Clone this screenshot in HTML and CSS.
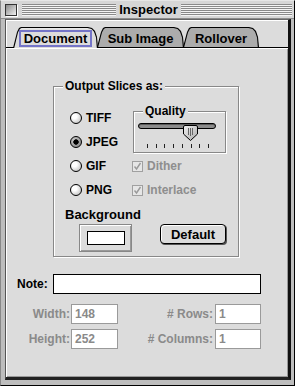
FILE: index.html
```html
<!DOCTYPE html>
<html lang="en">
<head>
    <meta charset="UTF-8">
    <title>Inspector</title>
    <link rel="stylesheet" href="styles.css">
</head>
<body>
    <div class="window">
        <div class="titlebar">
            <div class="title-half">
                <span class="close-box"></span>
                <span class="stripes"></span>
            </div>
            <span class="title">Inspector</span>
            <div class="title-half">
                <span class="stripes"></span>
            </div>
        </div>

        <div class="content">
            <div class="tabs">
                <div class="tab tab-doc active"><span class="tab-label">Document</span></div>
                <div class="tab tab-sub"><span class="tab-label">Sub Image</span></div>
                <div class="tab tab-roll"><span class="tab-label">Rollover</span></div>
            </div>

            <div class="panel">
                <fieldset class="group slices">
                    <legend>Output Slices as:</legend>
                    <div class="options">
                        <label class="radio"><span class="radio-dot"></span>TIFF</label>
                        <fieldset class="group quality">
                            <legend>Quality</legend>
                            <div class="slider">
                                <div class="track"></div>
                                <svg class="thumb" width="15" height="16" viewBox="0 0 15 16">
                                    <defs>
                                        <linearGradient id="thumbfill" x1="0" y1="0" x2="1" y2="1">
                                            <stop offset="0" stop-color="#f4f4f4"/>
                                            <stop offset="1" stop-color="#a8a8a8"/>
                                        </linearGradient>
                                    </defs>
                                    <path d="M2 0.5 H13 Q14.5 0.5 14.5 2 V9 L7.5 15.5 L0.5 9 V2 Q0.5 0.5 2 0.5 Z" fill="url(#thumbfill)" stroke="#000"/>
                                    <path d="M5.5 3 V10 M7.5 3 V11 M9.5 3 V10" stroke="#666"/>
                                </svg>
                            </div>
                            <div class="ticks">
                                <span></span><span></span><span></span><span></span>
                                <span></span><span></span><span></span><span></span>
                            </div>
                        </fieldset>
                        <label class="radio"><span class="radio-dot checked"></span>JPEG</label>
                        <label class="radio"><span class="radio-dot"></span>GIF</label>
                        <label class="check disabled"><span class="check-box"><svg width="9" height="9" viewBox="0 0 9 9"><path d="M1.5 4.5 L3.5 7 L7.5 1" fill="none" stroke="#9a9a9a" stroke-width="1.4"/></svg></span>Dither</label>
                        <label class="radio"><span class="radio-dot"></span>PNG</label>
                        <label class="check disabled"><span class="check-box"><svg width="9" height="9" viewBox="0 0 9 9"><path d="M1.5 4.5 L3.5 7 L7.5 1" fill="none" stroke="#9a9a9a" stroke-width="1.4"/></svg></span>Interlace</label>
                    </div>
                    <div class="bottom-row">
                        <div class="bg-block">
                            <div class="bg-label">Background</div>
                            <div class="swatch"><span class="swatch-color"></span></div>
                        </div>
                        <button class="btn-default">Default</button>
                    </div>
                </fieldset>

                <div class="note-row">
                    <span class="note-label">Note:</span>
                    <div class="field note-field"></div>
                </div>

                <div class="dims">
                    <span class="dim-label">Width:</span>
                    <span class="field dim-field">148</span>
                    <span class="dim-label right"># Rows:</span>
                    <span class="field dim-field">1</span>
                    <span class="dim-label">Height:</span>
                    <span class="field dim-field">252</span>
                    <span class="dim-label right"># Columns:</span>
                    <span class="field dim-field">1</span>
                </div>
            </div>
        </div>
    </div>
</body>
</html>
```

FILE: styles.css
```css
/* Reset */
* {
    margin: 0;
    padding: 0;
    box-sizing: border-box;
}

body {
    background-color: #bdbdbd;
    font-family: "Liberation Sans", Arial, sans-serif;
    font-size: 12px;
    font-weight: bold;
    color: #000;
}

.window {
    width: 295px;
    height: 386px;
    display: flex;
    flex-direction: column;
    background-color: #bdbdbd;
    border: 1px solid #000;
    border-color: #e6e6e6 #000 #000 #888;
}

/* Title bar */
.titlebar {
    height: 18px;
    display: flex;
    align-items: center;
    padding: 0 2px 0 4px;
    background-color: #d6d6d6;
    border-bottom: 1px solid #8c8c8c;
}

.title-half {
    flex: 1;
    display: flex;
    align-items: center;
}

.close-box {
    width: 12px;
    height: 12px;
    margin-top: 1px;
    margin-right: 5px;
    border: 1px solid #333;
    background: linear-gradient(135deg, #8a8a8a, #f0f0f0);
    box-shadow: 1px 1px 0 #fff;
}

.stripes {
    flex: 1;
    height: 12px;
    margin-top: 1px;
    background: repeating-linear-gradient(to bottom, #8a8a8a 0, #8a8a8a 1px, #f4f4f4 1px, #f4f4f4 2px);
}

.title {
    font-size: 13px;
    padding: 0 3px;
}

/* Window content */
.content {
    flex: 1;
    display: flex;
    flex-direction: column;
    margin: 0 3px 5px 4px;
    background-color: #dcdcdc;
    border-left: 1px solid #555;
    border-top: 1px solid #666;
    border-right: 3px solid #111;
    border-bottom: 3px solid #222;
    box-shadow: inset 1px 1px 0 #fff;
}

/* Tabs */
.tabs {
    position: relative;
    z-index: 2;
    display: flex;
    height: 27px;
    padding: 7px 0 0 7px;
}

.tab {
    position: relative;
    z-index: 1;
    height: 20px;
    display: flex;
    justify-content: center;
    align-items: flex-start;
    padding-top: 3px;
    font-size: 13px;
}

.tab::before {
    content: "";
    position: absolute;
    inset: 0;
    z-index: -2;
    background-color: #000;
    clip-path: polygon(0 100%, 4px 5px, 6px 1px, 8px 0, calc(100% - 10px) 0, calc(100% - 6px) 1px, calc(100% - 3px) 4px, calc(100% - 1px) 10px, 100% 100%);
}

.tab::after {
    content: "";
    position: absolute;
    inset: 0;
    z-index: -1;
    background-color: #acacac;
    clip-path: polygon(1.2px 100%, 5px 5.5px, 6.8px 2px, 8.5px 1px, calc(100% - 10.5px) 1px, calc(100% - 6.5px) 2px, calc(100% - 4px) 4.8px, calc(100% - 2px) 10.5px, calc(100% - 1.2px) 100%);
}

.tab-doc { width: 85px; }
.tab-sub { width: 87px; margin-left: -1px; }
.tab-roll { width: 76px; margin-left: -1px; }

.tab.active {
    z-index: 3;
    height: 21px;
}

.tab.active::after {
    background: linear-gradient(to bottom, #f2f2f2 0, #dcdcdc 3px);
}

.tab-label {
    height: 17px;
    line-height: 13px;
    padding: 0 3px;
    border: 2px solid transparent;
}

.active .tab-label {
    border-color: #7474c8;
}

/* Tab panel */
.panel {
    flex: 1;
    border-top: 1px solid #000;
    box-shadow: inset 1px 1px 0 #fff, inset -1px -1px 0 #999;
}

.group {
    border: 1px solid #888;
    box-shadow: inset 1px 1px 0 #fff, 1px 1px 0 #fff;
}

.group legend {
    background-color: #dcdcdc;
    padding: 0 2px;
}

.slices {
    width: 186px;
    margin: 31px 0 0 47px;
    padding: 13px 10px 4px 16px;
}

.slices > legend {
    line-height: 14px;
    margin-left: -7px;
}

.options {
    display: grid;
    grid-template-columns: 62px 1fr;
    grid-auto-rows: 24px;
}

.radio,
.check {
    display: flex;
    align-items: center;
    gap: 4px;
}

.radio-dot {
    width: 12px;
    height: 12px;
    border-radius: 50%;
    border: 1px solid #000;
    background: radial-gradient(circle at 35% 35%, #fff 0, #fff 25%, #b4b4b4 95%);
}

.radio-dot.checked {
    background: radial-gradient(circle, #000 0, #000 2.4px, transparent 3px),
                radial-gradient(circle at 35% 35%, #d0d0d0 0, #7c7c7c 95%);
}

.check {
    color: #8e8e8e;
}

.check-box {
    width: 11px;
    height: 11px;
    display: flex;
    align-items: center;
    justify-content: center;
    border: 1px solid #a0a0a0;
    background-color: #e6e6e6;
}

/* Quality slider */
.quality {
    grid-row: span 2;
    align-self: start;
    width: 93px;
    margin: -1px 0 0 1px;
    padding: 1px 4px 4px 4px;
}

.quality legend {
    line-height: 12px;
    margin-left: 5px;
}

.slider {
    position: relative;
    height: 17px;
}

.track {
    width: 78px;
    height: 6px;
    margin-top: 5px;
    border: 1px solid #000;
    border-radius: 3px;
    background-color: #8c8c8c;
    box-shadow: inset 0 1px 0 #5a5a5a;
}

.thumb {
    position: absolute;
    left: 45px;
    top: 2px;
}

.ticks {
    display: flex;
    justify-content: space-between;
    width: 62px;
    height: 4px;
    margin: 4px 0 0 9px;
}

.ticks span {
    width: 1px;
    background-color: #222;
}

/* Background + Default */
.bottom-row {
    display: flex;
    margin: 6px 0 0 -5px;
}

.bg-block {
    width: 75px;
    display: flex;
    flex-direction: column;
}

.bg-label {
    font-size: 13px;
    line-height: 14px;
}

.swatch {
    width: 53px;
    height: 28px;
    margin: 2px 0 0 14px;
    padding: 6px 6px 6px 7px;
    display: flex;
    border: 1px solid #888;
    background-color: #dcdcdc;
    box-shadow: inset 1px 1px 0 #fff, inset -1px -1px 0 #9a9a9a;
}

.swatch-color {
    flex: 1;
    border: 1px solid #000;
    background-color: #fff;
}

.btn-default {
    width: 66px;
    height: 20px;
    margin: 16px 0 0 20px;
    font-family: inherit;
    font-size: 13px;
    font-weight: bold;
    color: #000;
    background-color: #dcdcdc;
    border: 1px solid #000;
    border-radius: 4px;
    box-shadow: inset 1px 1px 0 #fff, 1px 1px 0 #555;
}

/* Note + dimensions */
.note-row {
    display: flex;
    align-items: center;
    margin: 17px 0 0 11px;
}

.note-label {
    width: 36px;
}

.field {
    background-color: #fff;
}

.note-field {
    width: 208px;
    height: 20px;
    border: 1px solid #000;
}

.dims {
    display: grid;
    grid-template-columns: 58px 47px 97px 46px;
    grid-auto-rows: 20px;
    row-gap: 5px;
    margin: 10px 0 0 7px;
    color: #8a8a8a;
}

.dim-label {
    text-align: right;
    line-height: 20px;
    padding-right: 1px;
}

.dim-label.right {
    padding-right: 2px;
}

.dim-field {
    border: 1px solid #9a9a9a;
    padding-left: 3px;
    line-height: 18px;
}
```
